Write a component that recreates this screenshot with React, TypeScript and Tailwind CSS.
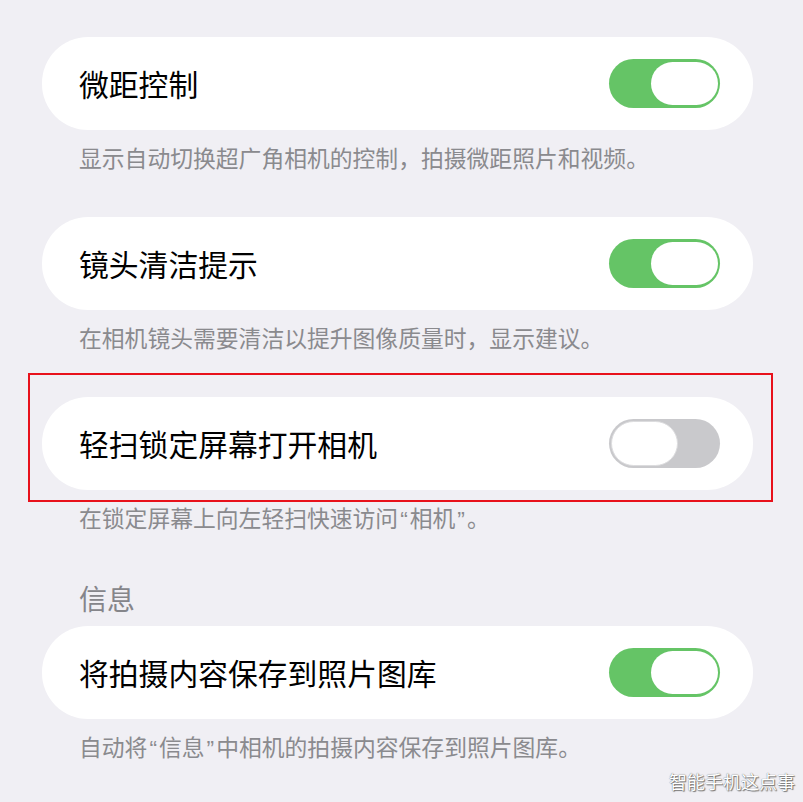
const font = { fontFamily: '"Noto Sans CJK SC", "Noto Sans", sans-serif' };

function Toggle({ on }: { on: boolean }) {
  return on ? (
    <div className="flex h-[49px] w-[111px] items-center justify-end rounded-full bg-[#65c466] pr-[2px]">
      <div className="h-[43px] w-[67px] rounded-full bg-white" />
    </div>
  ) : (
    <div className="flex h-[49px] w-[111px] items-center justify-start rounded-full bg-[#c9c9cc] pl-[2px]">
      <div className="h-[45px] w-[67px] rounded-full border border-[#dcdcde] bg-white" />
    </div>
  );
}

function Row({ title, on }: { title: string; on: boolean }) {
  return (
    <div className="flex h-[93px] w-[711px] items-center justify-between rounded-[46px] bg-white pl-[37px] pr-[33px]">
      <span className="text-[29.8px] leading-none text-black">{title}</span>
      <Toggle on={on} />
    </div>
  );
}

// quotes in the screenshot are narrow, latin-width marks
function Q({ c }: { c: string }) {
  return <span className="mx-[2px] font-['Liberation_Sans']">{c}</span>;
}

function Caption({ children }: { children: React.ReactNode }) {
  return <p className="pl-[37px] pt-[14px] text-[22.8px] leading-[28px] text-[#8a8a8e]">{children}</p>;
}

export default function App() {
  return (
    <div className="relative h-[802px] w-[803px] overflow-hidden bg-[#f0eff4] pl-[42px] pt-[37px]" style={font}>
      <Row title="微距控制" on />
      <Caption>显示自动切换超广角相机的控制，拍摄微距照片和视频。</Caption>

      <div className="mt-[45px]">
        <Row title="镜头清洁提示" on />
        <Caption>在相机镜头需要清洁以提升图像质量时，显示建议。</Caption>
      </div>

      <div className="relative mt-[45px]">
        <Row title="轻扫锁定屏幕打开相机" on={false} />
        <div className="absolute left-[-14px] top-[-24px] h-[129px] w-[745px] border-2 border-[#e8111b]" />
        <Caption>
          在锁定屏幕上向左轻扫快速访问<Q c="“" />相机<Q c="”" />。
        </Caption>
      </div>

      <h2 className="mt-[47px] h-[36px] pl-[37px] text-[28px] leading-[36px] text-[#85858a]">信息</h2>

      <div className="mt-[10px]">
        <Row title="将拍摄内容保存到照片图库" on />
        <Caption>
          自动将<Q c="“" />信息<Q c="”" />中相机的拍摄内容保存到照片图库。
        </Caption>
      </div>

      <div className="absolute bottom-[12px] right-[8px] text-[18px] leading-none text-white [text-shadow:0_0_1px_#555,1px_1px_1px_#777]">
        智能手机这点事
      </div>
    </div>
  );
}
